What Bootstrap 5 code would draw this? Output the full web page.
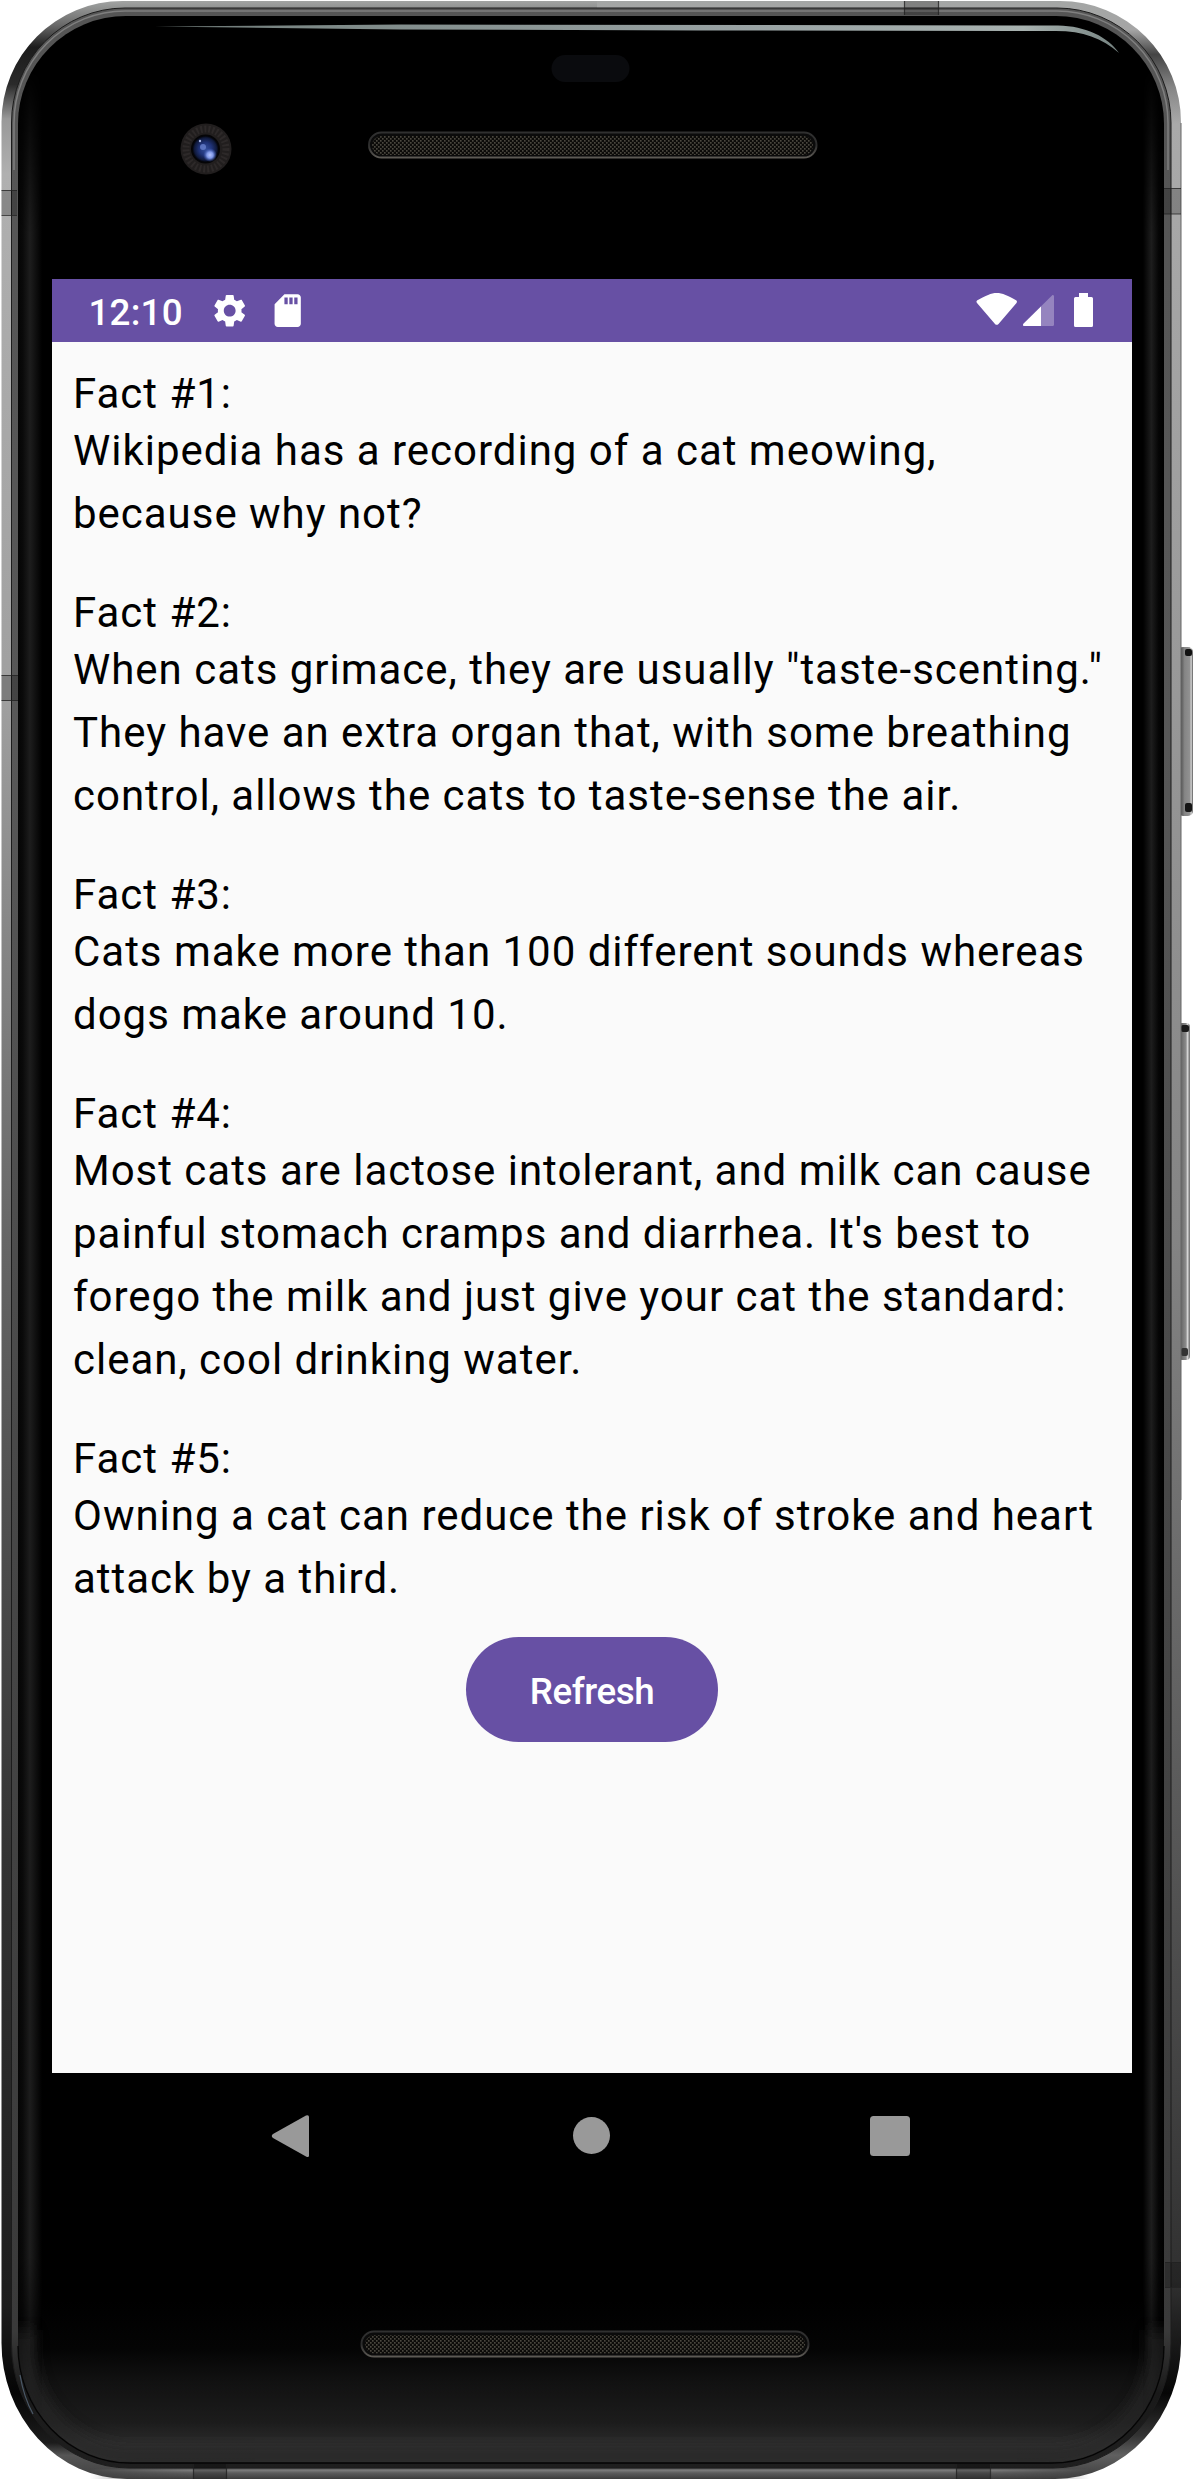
<!DOCTYPE html>
<html lang="en">
<head>
<meta charset="utf-8">
<meta name="viewport" content="width=device-width, initial-scale=1">
<title>Cat facts</title>
<link href="https://cdn.jsdelivr.net/npm/bootstrap@5.3.0/dist/css/bootstrap.min.css" rel="stylesheet">
<style>
  body { background: #fff; font-family: Roboto, "Liberation Sans", sans-serif; color: #000; }
  .phone { width: 1194px; height: 2480px; padding: 279px 62px 0 52px; }
  .phone-shell { left: 0; top: 0; width: 1194px; height: 2480px; }
  .phone-screen { width: 1080px; height: 1920px; }
  .status-bar { height: 63px; background: #6750a4; padding: 0 38px 0 36.5px; }
  .status-time { width: 121.5px; font-size: 36.75px; font-weight: 500; line-height: 63px; padding-top: 3px; letter-spacing: .2px; }
  .status-icon { width: 39.4px; height: 39.4px; }
  .status-icon + .status-icon { margin-left: 18.6px; }
  .fact-screen { background: #fafafa; padding: 27px 21px 0; }
  .fact-title { font-size: 42px; line-height: 50px; letter-spacing: .98px; font-weight: 400; }
  .fact-text { font-size: 42px; line-height: 63px; letter-spacing: .98px; margin-bottom: 43px; }
  .fact-item:last-child .fact-text { margin-bottom: 27px; }
  .btn-refresh { --bs-btn-color: #fff; --bs-btn-bg: #6750a4; --bs-btn-hover-color: #fff; --bs-btn-hover-bg: #5b4694; width: 252px; height: 105px; font-size: 36.75px; font-weight: 500; letter-spacing: -.4px; padding: 4px 0 0; }
  .nav-keys { height: 126px; background: #000; }
</style>
</head>
<body>
<div class="phone position-relative overflow-hidden">
  <svg class="phone-shell position-absolute" viewBox="0 0 1194 2480" aria-hidden="true">
    <defs>
      <linearGradient id="rimLeft" x1="0" y1="0" x2="0" y2="2480" gradientUnits="userSpaceOnUse">
        <stop offset="0" stop-color="#a4a6a5"/><stop offset=".010" stop-color="#6a6a6a"/><stop offset=".019" stop-color="#1c1c1c"/>
        <stop offset=".034" stop-color="#2a2a2a"/><stop offset=".048" stop-color="#999"/><stop offset=".07" stop-color="#b0b0b0"/>
        <stop offset=".28" stop-color="#a0a0a0"/><stop offset=".5" stop-color="#666"/><stop offset=".75" stop-color="#333"/>
        <stop offset=".93" stop-color="#1c1c1c"/><stop offset=".965" stop-color="#050505"/><stop offset=".985" stop-color="#1c1c1c"/><stop offset=".99" stop-color="#555"/><stop offset="1" stop-color="#404040"/>
      </linearGradient>
      <linearGradient id="rimRight" x1="0" y1="0" x2="0" y2="2480" gradientUnits="userSpaceOnUse">
        <stop offset="0" stop-color="#a4a6a5"/><stop offset=".012" stop-color="#a5a5a5"/><stop offset=".022" stop-color="#444"/>
        <stop offset=".035" stop-color="#858585"/><stop offset=".05" stop-color="#aaa"/><stop offset=".28" stop-color="#989898"/>
        <stop offset=".5" stop-color="#848484"/><stop offset=".75" stop-color="#555"/><stop offset=".92" stop-color="#303030"/>
        <stop offset=".965" stop-color="#060606"/><stop offset=".982" stop-color="#333"/><stop offset=".99" stop-color="#606060"/><stop offset="1" stop-color="#3c3c3c"/>
      </linearGradient>
      <linearGradient id="innerRim" x1="0" y1="0" x2="0" y2="2480" gradientUnits="userSpaceOnUse">
        <stop offset="0" stop-color="#555"/><stop offset=".3" stop-color="#585858"/><stop offset=".6" stop-color="#484848"/>
        <stop offset=".94" stop-color="#3a3a3a"/><stop offset=".965" stop-color="#191919"/><stop offset="1" stop-color="#202020"/>
      </linearGradient>
      <linearGradient id="chin" x1="0" y1="2300" x2="0" y2="2462" gradientUnits="userSpaceOnUse">
        <stop offset="0" stop-color="#000"/><stop offset=".3" stop-color="#040404"/><stop offset=".48" stop-color="#101010"/>
        <stop offset=".76" stop-color="#1c1c1c"/><stop offset=".88" stop-color="#2c2c2c"/><stop offset="1" stop-color="#2b2b2b"/>
      </linearGradient>
      <linearGradient id="chinRim" x1="0" y1="2468" x2="0" y2="2479" gradientUnits="userSpaceOnUse">
        <stop offset="0" stop-color="#444"/><stop offset=".2" stop-color="#7c7c7c"/><stop offset=".45" stop-color="#5c5c5c"/><stop offset="1" stop-color="#3c3c3c"/>
      </linearGradient>
      <linearGradient id="fadeEnds" x1="90" y1="0" x2="1090" y2="0" gradientUnits="userSpaceOnUse">
        <stop offset="0" stop-color="#fff" stop-opacity="0"/><stop offset=".1" stop-color="#fff"/><stop offset=".9" stop-color="#fff"/><stop offset="1" stop-color="#fff" stop-opacity="0"/>
      </linearGradient>
      <mask id="chinMask"><rect x="90" y="2460" width="1000" height="20" fill="url(#fadeEnds)"/></mask>
      <linearGradient id="fadeSides" x1="0" y1="70" x2="0" y2="2420" gradientUnits="userSpaceOnUse">
        <stop offset="0" stop-color="#fff" stop-opacity="0"/><stop offset=".07" stop-color="#fff"/><stop offset=".93" stop-color="#fff"/><stop offset="1" stop-color="#fff" stop-opacity="0"/>
      </linearGradient>
      <mask id="sideMask"><rect x="0" y="70" width="1194" height="2350" fill="url(#fadeSides)"/></mask>
      <linearGradient id="edgeL" x1="18" y1="0" x2="42" y2="0" gradientUnits="userSpaceOnUse">
        <stop offset="0" stop-color="#050505"/><stop offset=".2" stop-color="#0a0a0a"/><stop offset=".5" stop-color="#1d1d1d"/><stop offset="1" stop-color="#000"/>
      </linearGradient>
      <linearGradient id="edgeR" x1="1164" y1="0" x2="1143" y2="0" gradientUnits="userSpaceOnUse">
        <stop offset="0" stop-color="#000"/><stop offset=".25" stop-color="#050505"/><stop offset=".6" stop-color="#1d1d1d"/><stop offset="1" stop-color="#000"/>
      </linearGradient>
      <linearGradient id="shine" x1="155" y1="0" x2="1120" y2="0" gradientUnits="userSpaceOnUse">
        <stop offset="0" stop-color="#687371"/><stop offset=".15" stop-color="#7c8886"/><stop offset=".6" stop-color="#98a2a3"/><stop offset=".9" stop-color="#a8b2b0"/><stop offset="1" stop-color="#758381"/>
      </linearGradient>
      <linearGradient id="sideKey" x1="1181" y1="0" x2="1193" y2="0" gradientUnits="userSpaceOnUse">
        <stop offset="0" stop-color="#555"/><stop offset=".3" stop-color="#858585"/><stop offset=".75" stop-color="#929292"/><stop offset=".84" stop-color="#ddd"/><stop offset="1" stop-color="#555"/>
      </linearGradient>
      <linearGradient id="sideKey2" x1="1181" y1="0" x2="1190" y2="0" gradientUnits="userSpaceOnUse">
        <stop offset="0" stop-color="#666"/><stop offset=".55" stop-color="#8c8c8c"/><stop offset=".72" stop-color="#d5d5d5"/><stop offset="1" stop-color="#666"/>
      </linearGradient>
      <linearGradient id="grilleRim" x1="0" y1="0" x2="0" y2="1">
        <stop offset="0" stop-color="#303030"/><stop offset=".5" stop-color="#2c2c2c"/><stop offset="1" stop-color="#5c5954"/>
      </linearGradient>
      <radialGradient id="lens" cx=".5" cy=".5" r=".5">
        <stop offset="0" stop-color="#354f9c"/><stop offset=".5" stop-color="#1f3276"/><stop offset=".85" stop-color="#101a3c"/><stop offset="1" stop-color="#03040a"/>
      </radialGradient>
      <radialGradient id="glint"><stop offset="0" stop-color="#b4c4ff"/><stop offset=".45" stop-color="#7f97e6"/><stop offset="1" stop-color="#3552b0" stop-opacity="0"/></radialGradient>
      <pattern id="mesh" width="4" height="4" patternUnits="userSpaceOnUse">
        <rect width="4" height="4" fill="#0c0b09"/><rect x="0" y="0" width="1.6" height="1.7" fill="#4a473f"/><rect x="2" y="2" width="1.6" height="1.7" fill="#4a473f"/>
      </pattern>
      <filter id="soft" x="-10%" y="-10%" width="120%" height="120%"><feGaussianBlur stdDeviation="8"/></filter>
      <clipPath id="glass"><path d="M18 124A108 108 0 0 1 126 16H1056A108 108 0 0 1 1164 124V2346A112 117 0 0 1 1052 2463H130A112 117 0 0 1 18 2346Z"/></clipPath>
      <clipPath id="halfL"><rect x="0" y="0" width="597" height="2480"/></clipPath>
      <clipPath id="halfR"><rect x="597" y="0" width="597" height="2480"/></clipPath>
      <path id="outline" d="M1.5 122A121 121 0 0 1 122.500 1H1060A121 121 0 0 1 1181 122V2342A126 136 0 0 1 1055 2479H127A126 136 0 0 1 1.500 2342Z"/>
    </defs>

    <!-- side keys -->
    <rect x="1178" y="647" width="15" height="169" rx="5" fill="url(#sideKey)"/>
    <rect x="1185" y="649" width="7" height="7" rx="2" fill="#111"/><rect x="1185" y="803" width="7" height="9" rx="2" fill="#151515"/>
    <rect x="1178" y="1023" width="12" height="337" rx="4" fill="url(#sideKey2)"/>
    <rect x="1181" y="1025" width="8" height="7" rx="2" fill="#1a1a1a"/><rect x="1181" y="1348" width="7" height="8" rx="2" fill="#333"/>

    <!-- metal frame -->
    <use href="#outline" fill="url(#rimLeft)" clip-path="url(#halfL)"/>
    <use href="#outline" fill="url(#rimRight)" clip-path="url(#halfR)"/>
    <rect x="90" y="2468" width="1000" height="11" fill="url(#chinRim)" mask="url(#chinMask)"/>
    <path d="M11.500 123A113.500 115 0 0 1 125 8H1057A114 115 0 0 1 1171 123V2344A118 124 0 0 1 1053 2468H129A117.500 124 0 0 1 11.500 2344Z" fill="url(#innerRim)" stroke="#1c1c1c" stroke-width="1"/>
    <path d="M14 170V123A111 112 0 0 1 125 11H1057A111 112 0 0 1 1168 123V170" fill="none" stroke="#929292" stroke-width="1.500" opacity=".7"/>
    <path d="M1181 123V1500" stroke="#666" stroke-width="1"/>

    <!-- glass -->
    <g clip-path="url(#glass)">
      <rect x="17" y="15" width="1149" height="2450" fill="#000"/>
      <rect x="17" y="2300" width="1149" height="165" fill="url(#chin)"/>
      <g mask="url(#sideMask)">
        <rect x="18" y="70" width="24" height="2350" fill="url(#edgeL)"/>
        <rect x="1143" y="70" width="21" height="2350" fill="url(#edgeR)"/>
      </g>
      <path d="M24 2330V2346A106 110 0 0 0 130 2456H1052A106 110 0 0 0 1158 2346V2330" fill="none" stroke="#2c2c2c" stroke-width="16" opacity=".8" filter="url(#soft)"/>
    </g>
    <path d="M18 2346A112 117 0 0 0 130 2463H1052A112 117 0 0 0 1164 2346" fill="none" stroke="#050505" stroke-width="1.300"/>
    <path d="M20 2375Q24 2398 33 2414" fill="none" stroke="#4b5968" stroke-width="1.200"/>
    <path d="M155 26.500L400 24.500L1058 25.500C1086 26 1108 37 1119 53C1102 38 1083 31 1056 31L700 30.500L400 29.500Z" fill="url(#shine)"/>

    <!-- antenna bands -->
    <path fill="#000" fill-opacity=".22" d="M1.500 190H17V215H1.500ZM1.500 675H18V701H1.500ZM1164 188H1181V214H1164ZM904 1V15H939V1ZM193 2464V2479H227V2464ZM956 2464V2479H990V2464ZM1165 2262H1181V2287H1165Z"/>
    <path fill="none" stroke="#222" stroke-opacity=".75" stroke-width="1.200" d="M1.500 190.500H17M1.500 215.500H17M1.500 675.500H18M1.500 700.500H18M1164 188.500H1181M1164 214H1181M904.500 1V15M938.500 1V15M193.500 2464V2479M226.500 2464V2479M956.500 2464V2479M990.500 2464V2479M1165 2262.500H1181M1165 2287.500H1181"/>

    <!-- camera, sensor, speaker grilles -->
    <circle cx="206" cy="149" r="25.500" fill="#211e1e"/>
    <circle cx="206" cy="149" r="20" fill="none" stroke="#2d2929" stroke-width="7" stroke-dasharray="2 2"/>
    <circle cx="205.500" cy="149" r="14.500" fill="#050507"/>
    <circle cx="205.500" cy="149" r="13" fill="url(#lens)"/>
    <circle cx="210" cy="155" r="7" fill="url(#glint)"/><circle cx="203" cy="147" r="3" fill="#6c84d2" opacity=".75"/><circle cx="200" cy="141" r="1.200" fill="#a5b4e4"/>
    <rect x="551.500" y="55" width="78" height="27" rx="13.500" fill="#0a0b0e"/>
    <rect x="369" y="132.500" width="447.500" height="25" rx="12.500" fill="#0b0b0b" stroke="url(#grilleRim)" stroke-width="2"/>
    <rect x="372" y="136" width="441" height="19" rx="9.500" fill="url(#mesh)"/>
    <rect x="361.500" y="2331.500" width="447" height="25" rx="12.500" fill="#0b0b0b" stroke="url(#grilleRim)" stroke-width="2"/>
    <rect x="365" y="2335" width="440" height="18.500" rx="9.200" fill="url(#mesh)"/>
  </svg>

  <div class="phone-screen position-relative d-flex flex-column">
    <header class="status-bar d-flex align-items-center justify-content-between text-white">
      <div class="d-flex align-items-center">
        <span class="status-time">12:10</span>
        <svg class="status-icon" viewBox="0 0 24 24" fill="#fff"><path d="M19.140 12.940c.04-.3.06-.61.06-.94 0-.32-.02-.64-.07-.94l2.030-1.580c.18-.14.23-.41.12-.61l-1.920-3.320c-.12-.22-.37-.29-.59-.22l-2.390.96c-.5-.38-1.030-.7-1.620-.94l-.36-2.540c-.04-.24-.24-.41-.48-.41h-3.840c-.24 0-.43.17-.47.41l-.36 2.540c-.59.24-1.130.57-1.620.94l-2.390-.96c-.22-.08-.47 0-.59.22L2.740 8.870c-.12.21-.08.47.12.61l2.030 1.580c-.05.3-.09.63-.09.94s.02.64.07.94l-2.030 1.580c-.18.14-.23.41-.12.61l1.920 3.320c.12.22.37.29.59.22l2.390-.96c.5.38 1.030.7 1.620.94l.36 2.540c.05.24.24.41.48.41h3.840c.24 0 .44-.17.47-.41l.36-2.540c.59-.24 1.130-.56 1.620-.94l2.390.96c.22.08.47 0 .59-.22l1.920-3.320c.12-.22.07-.47-.12-.61l-2.010-1.580zM12 15.600c-1.980 0-3.600-1.620-3.600-3.600s1.620-3.600 3.600-3.600 3.600 1.620 3.600 3.600-1.620 3.600-3.600 3.600z"/></svg>
        <svg class="status-icon" viewBox="0 0 24 24" fill="#fff"><path d="M18 2h-8L4.020 8 4 20c0 1.100.9 2 2 2h12c1.100 0 2-.9 2-2V4c0-1.100-.9-2-2-2zm-6 6h-2V4h2v4zm3 0h-2V4h2v4zm3 0h-2V4h2v4z"/></svg>
      </div>
      <svg width="120" height="63" viewBox="974 279 120 63" fill="#fff">
        <path d="M977 300.500C986 295.500 991 293 996.700 293S1008 295.500 1016.500 300.500Q1017.500 301.500 1016.500 303L998.500 324Q996.700 325.700 995 324L977 303Q975.700 301.500 977 300.500Z"/>
        <path d="M1052.500 295Q1054 294.500 1054 296.500V324.500Q1054 326 1052.500 326H1024.500Q1021.800 326 1023.700 323.500Z" fill-opacity=".3"/>
        <path d="M1041 306.500V326H1024.500Q1021.800 326 1023.700 323.500Z"/>
        <path d="M1079 293h9v4h3.500q1.500 0 1.500 1.500v27q0 1.500-1.500 1.500h-16q-1.500 0-1.500-1.500v-27q0-1.500 1.500-1.500h3.500z"/>
      </svg>
    </header>

    <main class="fact-screen flex-grow-1">
      <section>
        <article class="fact-item"><h1 class="fact-title m-0">Fact #1:</h1><p class="fact-text">Wikipedia has a recording of a cat meowing, because why not?</p></article>
        <article class="fact-item"><h1 class="fact-title m-0">Fact #2:</h1><p class="fact-text">When cats grimace, they are usually "taste-scenting." They have an extra organ that, with some breathing control, allows the cats to taste-sense the air.</p></article>
        <article class="fact-item"><h1 class="fact-title m-0">Fact #3:</h1><p class="fact-text">Cats make more than 100 different sounds whereas dogs make around 10.</p></article>
        <article class="fact-item"><h1 class="fact-title m-0">Fact #4:</h1><p class="fact-text">Most cats are lactose intolerant, and milk can cause painful stomach cramps and diarrhea. It's best to forego the milk and just give your cat the standard: clean, cool drinking water.</p></article>
        <article class="fact-item"><h1 class="fact-title m-0">Fact #5:</h1><p class="fact-text">Owning a cat can reduce the risk of stroke and heart attack by a third.</p></article>
      </section>
      <div class="d-flex justify-content-center"><button type="button" class="btn btn-refresh rounded-pill border-0">Refresh</button></div>
    </main>

    <nav class="nav-keys" aria-label="System navigation">
      <svg class="d-block" width="1080" height="126" viewBox="52 2073 1080 126" fill="#999">
        <path d="M273 2134L306 2115.500Q309 2114.500 309 2117V2155.500Q309 2158 306 2156.500L273 2138Q270.500 2136 273 2134Z"/>
        <circle cx="591.500" cy="2135.500" r="18.500"/>
        <rect x="870" y="2116" width="40" height="40" rx="3.500"/>
      </svg>
    </nav>
  </div>
</div>
<script src="https://cdn.jsdelivr.net/npm/bootstrap@5.3.0/dist/js/bootstrap.bundle.min.js"></script>
</body>
</html>
